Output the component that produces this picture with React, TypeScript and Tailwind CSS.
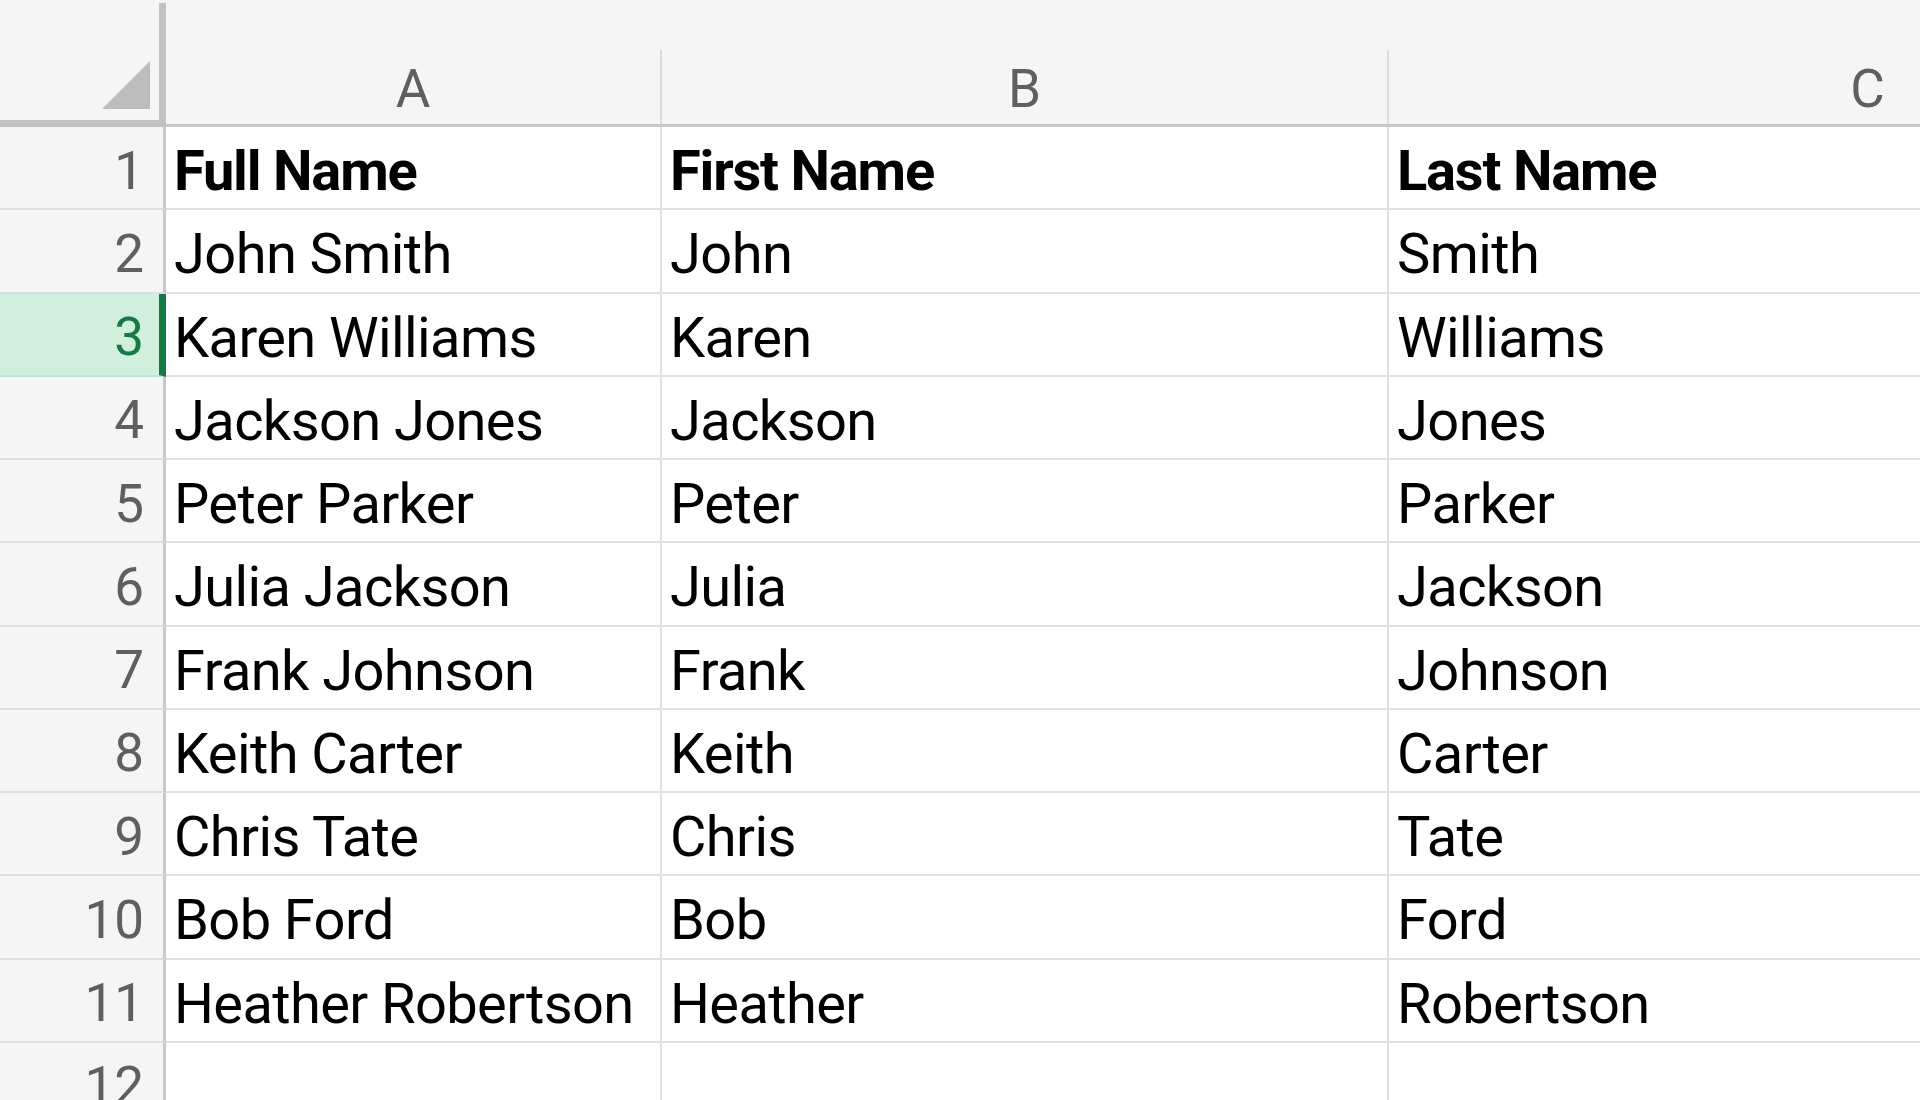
const rows = [
  ["Full Name", "First Name", "Last Name"],
  ["John Smith", "John", "Smith"],
  ["Karen Williams", "Karen", "Williams"],
  ["Jackson Jones", "Jackson", "Jones"],
  ["Peter Parker", "Peter", "Parker"],
  ["Julia Jackson", "Julia", "Jackson"],
  ["Frank Johnson", "Frank", "Johnson"],
  ["Keith Carter", "Keith", "Carter"],
  ["Chris Tate", "Chris", "Tate"],
  ["Bob Ford", "Bob", "Ford"],
  ["Heather Robertson", "Heather", "Robertson"],
  ["", "", ""],
];

const selectedRow = 3;

function ColumnHeaders() {
  return (
    <div className="flex h-[127px] shrink-0 bg-[#f5f5f5]">
      <div className="w-[166px] shrink-0 pt-[3px]">
        <div className="h-full border-r-[7px] border-b-[7px] border-[#c2c2c2] flex items-end justify-end pr-[9px] pb-[11px]">
          <svg width="48" height="48" viewBox="0 0 48 48">
            <polygon points="48,0 48,48 0,48" fill="#bdbdbd" />
          </svg>
        </div>
      </div>
      <div className="flex flex-1 min-w-0 pt-[50px] border-b-[3px] border-[#c8c8c8] text-[53px] leading-none text-[#5f5f5f]">
        <div className="w-[494px] shrink-0 flex justify-center pt-[13px]">A</div>
        <div className="w-[727px] shrink-0 border-l-2 border-[#dcdcdc] flex justify-center pt-[13px]">B</div>
        <div className="w-[959px] shrink-0 border-l-2 border-[#dcdcdc] flex justify-center pt-[13px]">C</div>
      </div>
    </div>
  );
}

function Row({ n, cells }: { n: number; cells: string[] }) {
  const selected = n === selectedRow;
  const bold = n === 1;
  return (
    <div className="flex h-[83.25px] shrink-0">
      <div
        className={
          selected
            ? "w-[166px] shrink-0 flex items-center justify-end pr-[15px] pt-[7px] bg-[#d0efdc] text-[#107c41] border-r-[7px] border-r-[#107c41] border-b-2 border-b-[#c4e5d1]"
            : "w-[166px] shrink-0 flex items-center justify-end pr-[19px] pt-[7px] bg-[#f5f5f5] text-[#5f5f5f] border-r-[3px] border-r-[#c8c8c8] border-b-2 border-b-[#dedede]"
        }
      >
        <span className="text-[53px] leading-none">{n}</span>
      </div>
      <div
        className={`flex flex-1 min-w-0 border-b-2 border-[#e1e1e1] text-[56px] leading-none text-black ${
          bold ? "font-bold tracking-[-1.2px]" : "tracking-[-0.6px]"
        }`}
      >
        <div className="w-[494px] shrink-0 flex items-center pl-[8px] pt-[7px] whitespace-nowrap">{cells[0]}</div>
        <div className="w-[727px] shrink-0 border-l-2 border-[#e1e1e1] flex items-center pl-[8px] pt-[7px] whitespace-nowrap">{cells[1]}</div>
        <div className="w-[959px] shrink-0 border-l-2 border-[#e1e1e1] flex items-center pl-[8px] pt-[7px] whitespace-nowrap">{cells[2]}</div>
      </div>
    </div>
  );
}

export default function App() {
  return (
    <div className="w-[1920px] h-[1100px] overflow-hidden bg-white font-['Roboto','Liberation_Sans',sans-serif] flex flex-col">
      <ColumnHeaders />
      {rows.map((cells, i) => (
        <Row key={i} n={i + 1} cells={cells} />
      ))}
    </div>
  );
}
